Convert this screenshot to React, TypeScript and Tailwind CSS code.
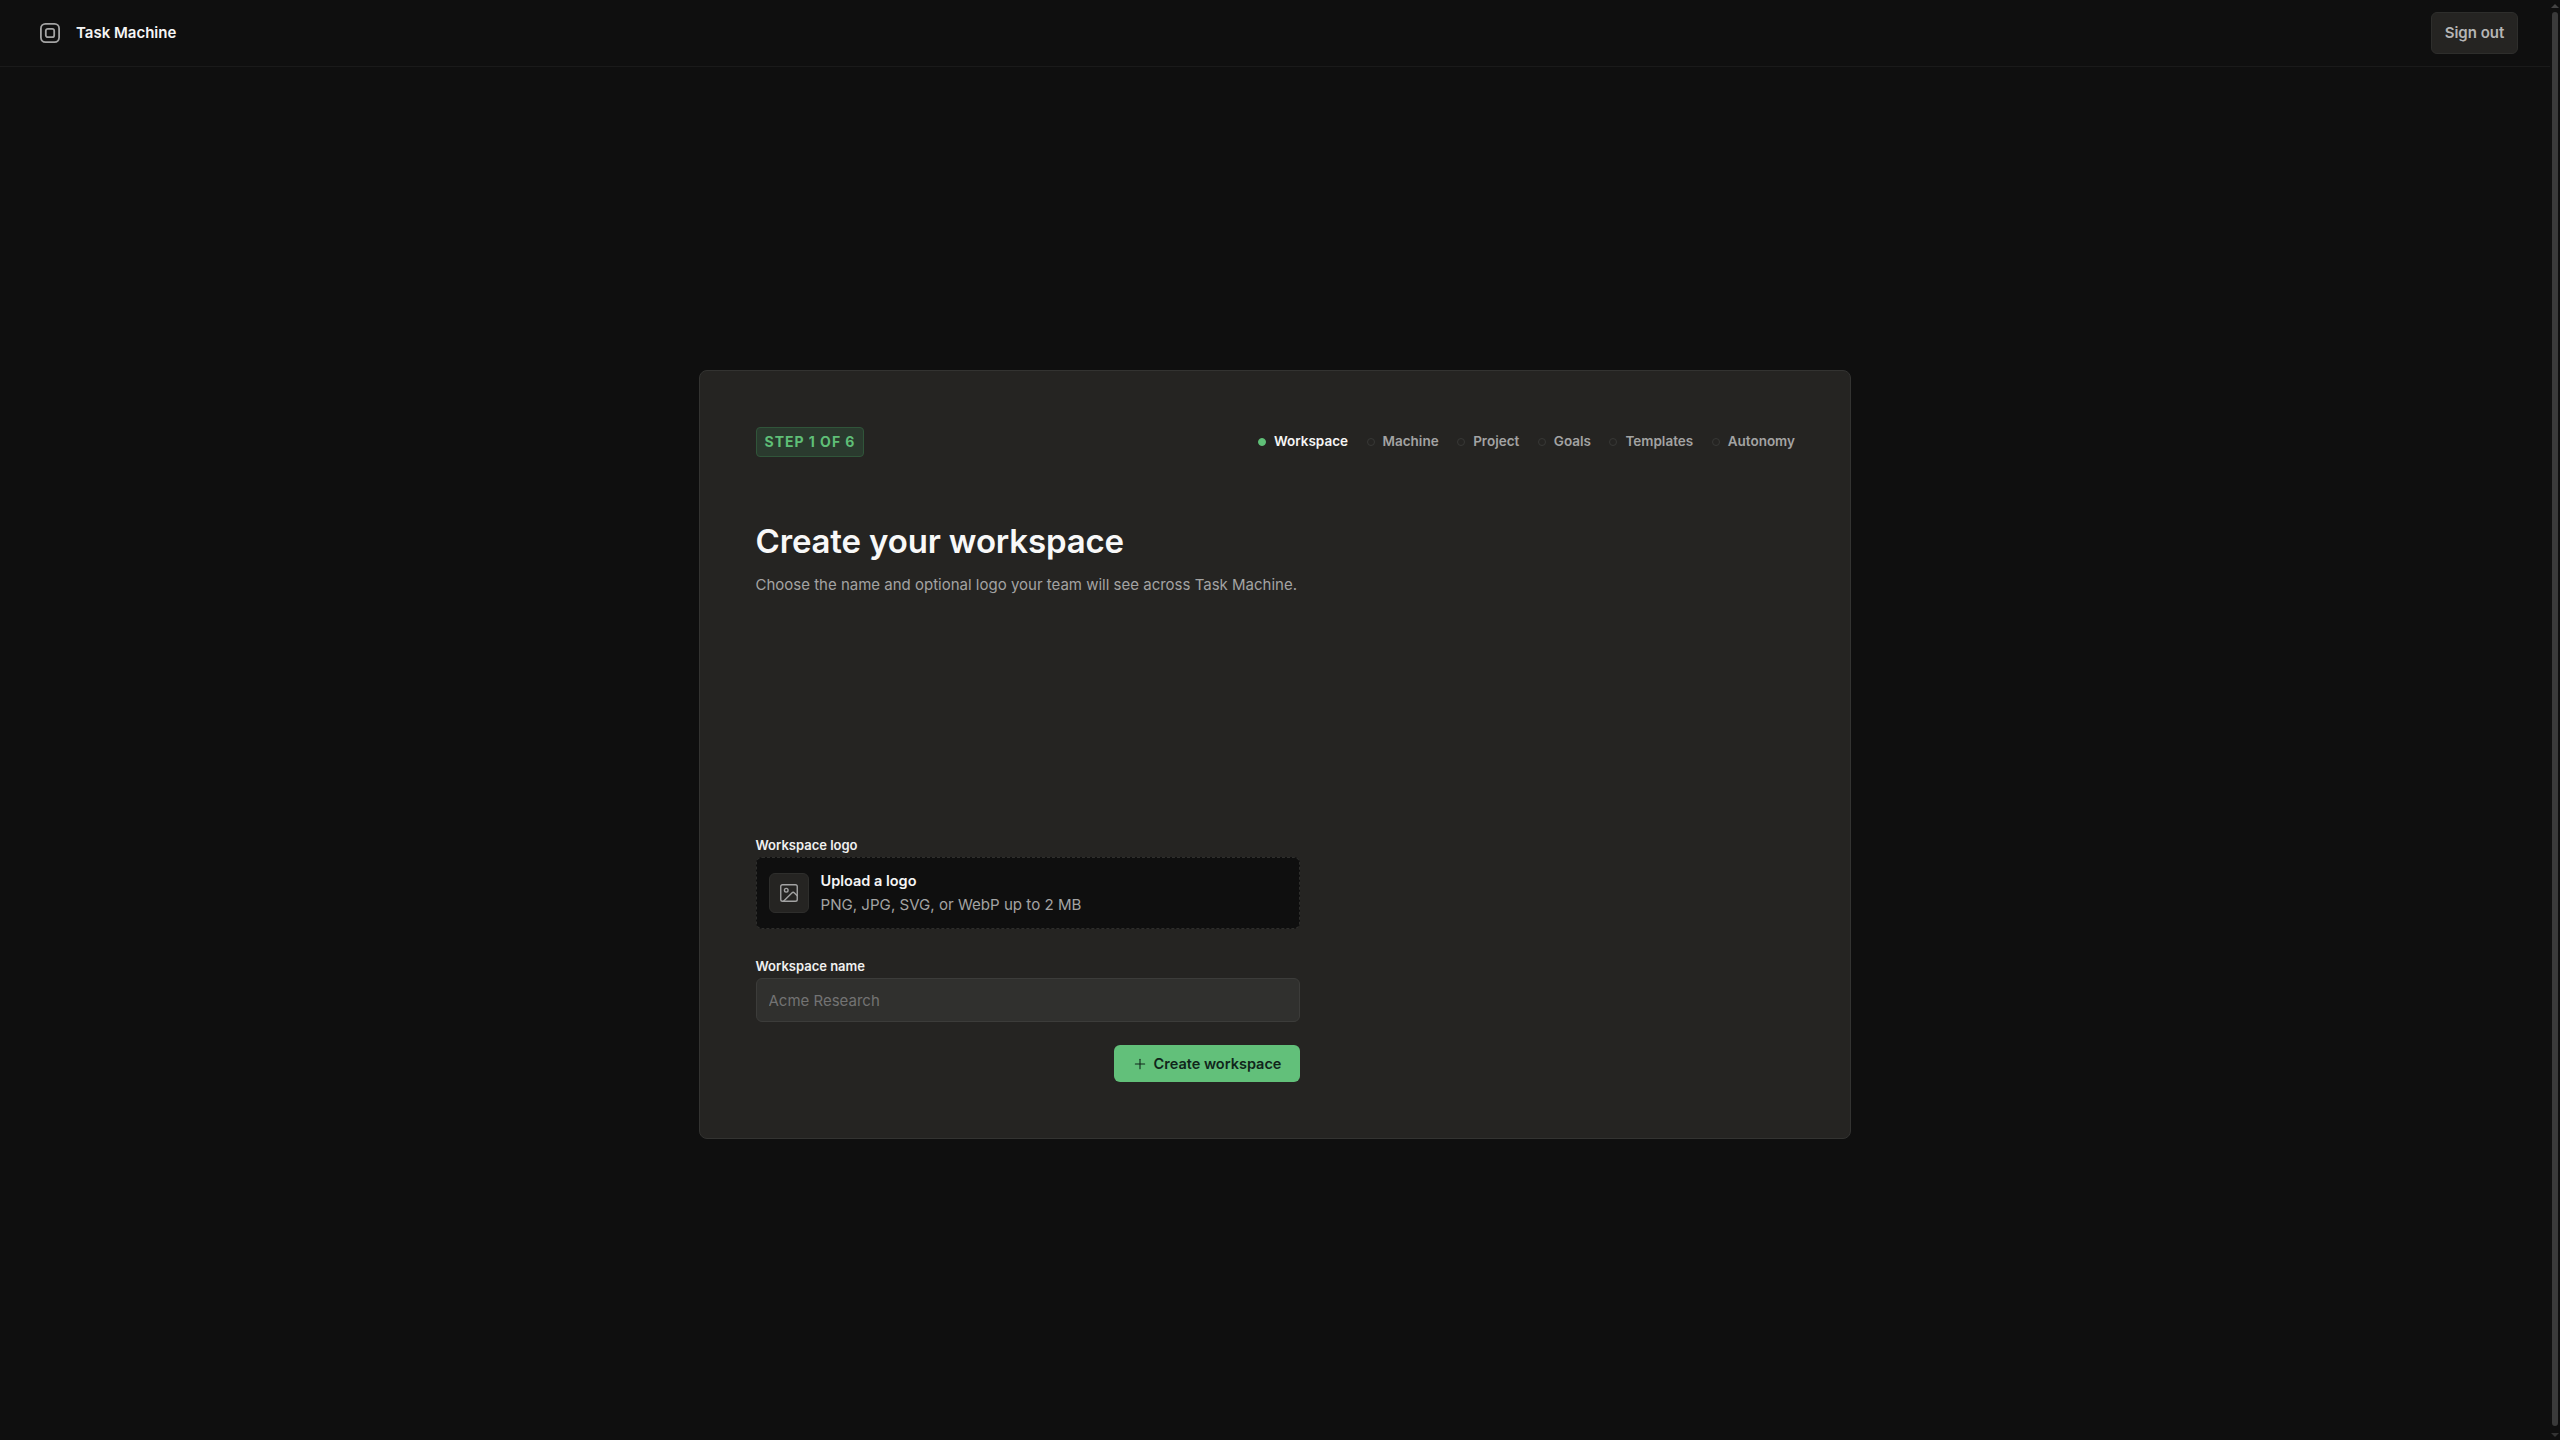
import React from 'react';
import { ImageIcon, Plus } from 'lucide-react';

const STEPS = ['Workspace', 'Machine', 'Project', 'Goals', 'Templates', 'Autonomy'];

const StepItem: React.FC<{ label: string; active: boolean }> = ({ label, active }) => (
    <div className="flex items-center gap-[8px]">
        <span className={`h-[8px] w-[8px] rounded-full border ${active ? 'border-[#5fbf77] bg-[#5fbf77]' : 'border-[#383836] bg-transparent'}`} />
        <span className={`text-[13.5px] font-semibold leading-none ${active ? 'text-[#f5f5f5]' : 'text-[#a3a3a3]'}`}>{label}</span>
    </div>
);

const App: React.FC = () => {
    return (
        <div className="flex h-screen overflow-hidden bg-[#0f0f0f] font-['Inter',sans-serif]">
            <div className="flex min-w-0 flex-1 flex-col">
                <header className="flex h-[67px] shrink-0 items-center justify-between border-b border-[#1a1a1a] pl-[40px] pr-[32px]">
                    <div className="flex items-center gap-[16px]">
                        <svg width="20" height="20" viewBox="0 0 20 20" fill="none" stroke="#a3a3a3" strokeWidth="1.8">
                            <rect x="0.9" y="0.9" width="18.2" height="18.2" rx="4.5" />
                            <rect x="5.8" y="5.8" width="8.4" height="8.4" rx="2" />
                        </svg>
                        <span className="text-[15px] font-semibold text-[#f5f5f5]">Task Machine</span>
                    </div>
                    <button className="flex h-[42px] w-[87px] items-center justify-center rounded-[6px] border border-[#2e2e2c] bg-[#252422] text-[15px] font-semibold text-[#b5b5b5]">
                        Sign out
                    </button>
                </header>
                <main className="flex flex-1 justify-center pt-[303px]">
                    <section className="flex h-[769px] w-[1152px] flex-col rounded-[8px] border border-[#333331] bg-[#252422] pl-[55.5px] pr-[55px] pt-[56px]">
                        <div className="flex items-center justify-between">
                            <span className="flex h-[30px] items-center rounded-[4px] border border-[#30553a] bg-[#2a3a2e] px-[8px] pb-[1px] text-[14px] font-bold tracking-[0.07em] text-[#5fbf77]">
                                STEP 1 OF 6
                            </span>
                            <div className="flex items-center gap-[18.5px] pb-[1px]">
                                {STEPS.map((step, i) => (
                                    <StepItem key={step} label={step} active={i === 0} />
                                ))}
                            </div>
                        </div>
                        <h1 className="mt-[62px] text-[33px] font-semibold leading-[44px] tracking-[-0.15px] text-[#f8f8f8]">Create your workspace</h1>
                        <p className="mt-[10px] text-[15px] leading-[24px] text-[#a3a3a3]">
                            Choose the name and optional logo your team will see across Task Machine.
                        </p>
                        <div className="mt-[240px] flex w-[544px] flex-col">
                            <label className="text-[13px] font-semibold leading-[16px] text-[#f0f0f0]">Workspace logo</label>
                            <div className="mt-[4px] flex h-[72px] items-center gap-[12px] rounded-[6px] border border-dashed border-[#2e2e2c] bg-[#0f0f0f] px-[12px]">
                                <div className="flex h-[40px] w-[40px] items-center justify-center rounded-[6px] border border-[#2e2e2c] bg-[#252422]">
                                    <ImageIcon size={22} strokeWidth={1.5} className="text-[#a3a3a3]" />
                                </div>
                                <div className="flex flex-col">
                                    <span className="text-[14.5px] font-semibold leading-[24px] text-[#f5f5f5]">Upload a logo</span>
                                    <span className="text-[15.1px] leading-[24px] text-[#a3a3a3]">PNG, JPG, SVG, or WebP up to 2 MB</span>
                                </div>
                            </div>
                            <label className="mt-[29px] text-[13px] font-semibold leading-[16px] text-[#f0f0f0]">Workspace name</label>
                            <input
                                placeholder="Acme Research"
                                className="mt-[4px] h-[44px] w-full rounded-[6px] border border-[#3c3c3a] bg-[#30302e] px-[12px] text-[15px] outline-none placeholder:text-[#737373]"
                            />
                            <div className="mt-[23px] flex justify-end">
                                <button className="flex h-[37px] w-[186px] items-center justify-center gap-[6px] rounded-[6px] bg-[#62c07a] text-[14.5px] font-semibold text-[#10251a]">
                                    <Plus size={16} strokeWidth={1.6} />
                                    Create workspace
                                </button>
                            </div>
                        </div>
                    </section>
                </main>
            </div>
            {/* page scrollbar as it shows in the capture */}
            <aside className="flex w-[10px] shrink-0 flex-col items-center pb-[3px] pt-[4px]">
                <svg width="8" height="4" viewBox="0 0 8 4" fill="#444444"><polygon points="4,0 8,4 0,4" /></svg>
                <div className="mb-[7px] mt-[4px] w-[6px] flex-1 rounded-full bg-[#3a3a3a]" />
                <svg width="8" height="4" viewBox="0 0 8 4" fill="#333333"><polygon points="0,0 8,0 4,4" /></svg>
            </aside>
        </div>
    );
};

export default App;
